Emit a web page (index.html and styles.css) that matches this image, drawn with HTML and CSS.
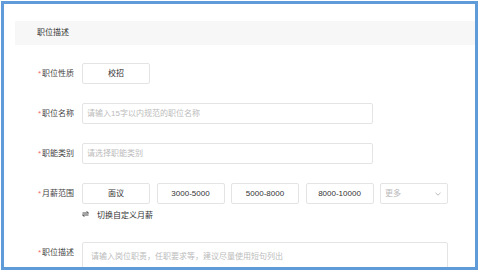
FILE: index.html
```html
<!DOCTYPE html>
<html>
<head>
    <title>职位描述</title>
    <link rel="stylesheet" href="styles.css">
</head>
<body>
    <div class="frame">
        <div class="section-title">职位描述</div>

        <form class="job-form">
            <div class="row">
                <label class="label"><span class="req">*</span>职位性质</label>
                <div class="opt">校招</div>
            </div>

            <div class="row">
                <label class="label" for="job_name"><span class="req">*</span>职位名称</label>
                <input type="text" id="job_name" class="field" placeholder="请输入15字以内规范的职位名称">
            </div>

            <div class="row">
                <label class="label" for="job_type"><span class="req">*</span>职能类别</label>
                <input type="text" id="job_type" class="field" placeholder="请选择职能类别">
            </div>

            <div class="row salary-row">
                <label class="label"><span class="req">*</span>月薪范围</label>
                <div class="salary">
                    <div class="salary-opts">
                        <div class="opt">面议</div>
                        <div class="opt">3000-5000</div>
                        <div class="opt">5000-8000</div>
                        <div class="opt">8000-10000</div>
                        <div class="opt more">
                            <span>更多</span>
                            <svg width="6" height="4" viewBox="0 0 6 4"><path d="M0.5 0.8 L3 3.2 L5.5 0.8" fill="none" stroke="#aaa" stroke-width="0.8"/></svg>
                        </div>
                    </div>
                    <div class="toggle">
                        <svg class="toggle-icon" width="7" height="6" viewBox="0 0 7 6">
                            <path d="M0.5 2 H6.5 L4.5 0.3" fill="none" stroke="#333" stroke-width="0.9"/>
                            <path d="M6.5 4 H0.5 L2.5 5.7" fill="none" stroke="#333" stroke-width="0.9"/>
                        </svg>
                        <span>切换自定义月薪</span>
                    </div>
                </div>
            </div>

            <div class="row desc-row">
                <label class="label" for="job_desc"><span class="req">*</span>职位描述</label>
                <textarea id="job_desc" class="area" placeholder="请输入岗位职责，任职要求等，建议尽量使用短句列出"></textarea>
            </div>
        </form>
    </div>
</body>
</html>
```

FILE: styles.css
```css
body {
    font-family: 'Liberation Sans', 'Noto Sans CJK SC', sans-serif;
    margin: 0;
    padding: 0;
    background-color: white;
    color: #333;
    font-size: 8px;
}

.frame {
    margin: 1px;
    width: 477px;
    height: 269px;
    border: 3px solid #5f9bd8;
    box-sizing: border-box;
    overflow: hidden;
    padding: 17px 0 0 11px;
}

.section-title {
    background-color: #f7f7f7;
    height: 24px;
    line-height: 24px;
    padding-left: 22px;
    color: #333;
}

.job-form {
    margin-top: 18px;
}

.row {
    display: flex;
    align-items: flex-start;
    margin-bottom: 19px;
}

.label {
    width: 59px;
    margin-right: 8px;
    text-align: right;
    line-height: 21px;
    color: #444;
    flex-shrink: 0;
}

.req {
    color: #f56c6c;
    margin-right: 1px;
}

.opt {
    width: 68px;
    height: 21px;
    box-sizing: border-box;
    border: 1px solid #e4e4e4;
    border-radius: 2px;
    line-height: 19px;
    text-align: center;
    color: #333;
}

.field {
    width: 291px;
    height: 21px;
    box-sizing: border-box;
    border: 1px solid #e4e4e4;
    border-radius: 2px;
    padding: 0 4px;
    margin: 0;
    font-family: inherit;
    font-size: 8px;
    outline: none;
}

.field::placeholder,
.area::placeholder {
    color: #bbb;
}

.salary-opts {
    display: flex;
    gap: 6.5px;
}

.more {
    display: flex;
    justify-content: space-between;
    align-items: center;
    padding: 0 6px 0 4px;
    color: #bbb;
}

.toggle {
    display: flex;
    align-items: center;
    height: 10px;
    margin-top: 5px;
    color: #333;
}

.toggle-icon {
    margin-right: 8px;
}

.salary-row {
    margin-bottom: 23px;
}

.area {
    width: 366px;
    height: 60px;
    box-sizing: border-box;
    border: 1px solid #e4e4e4;
    border-radius: 2px;
    padding: 8px 8px;
    margin: 0;
    font-family: inherit;
    font-size: 8px;
    line-height: 12px;
    resize: none;
    outline: none;
}
```
